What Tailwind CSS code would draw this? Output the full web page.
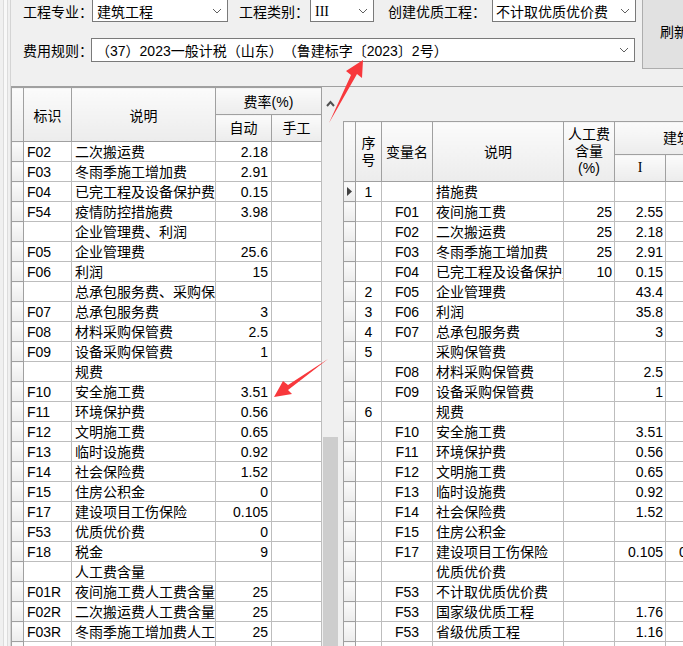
<!DOCTYPE html>
<html lang="zh-CN">
<head>
<meta charset="UTF-8" />
<title>费率</title>
<script src="https://cdn.jsdelivr.net/npm/@tailwindcss/browser@4"></script>
</head>
<body class="w-[683px] h-[646px] overflow-hidden bg-[#f0f0f0] text-[14px] leading-[20px] text-black [text-spacing-trim:space-all]" style="font-family:'Liberation Sans','Noto Sans CJK SC',sans-serif">
<div id="app" class="relative w-[683px] h-[646px] overflow-hidden flex">
  <!-- left gutter -->
  <div class="w-[11px] shrink-0 pl-[3px] border-r border-[#d4d4d4]">
    <div class="w-[5px] h-full bg-[#f8f8f8] border-x border-[#dcdcdc]"></div>
  </div>
  <div class="w-[672px] shrink-0 flex flex-col">
    <!-- top form -->
    <div class="h-[86px] shrink-0 flex">
      <div class="w-[630px] shrink-0 pl-[12px] whitespace-nowrap">
        <div class="flex items-center h-[23px] -mt-px">
          <span class="w-[69px] shrink-0 pt-[2px]">工程专业：</span>
          <div class="w-[136px] h-[23px] border border-[#7a7a7a] bg-white flex items-center justify-between pl-[4px] pr-[3px] shrink-0"><span class="pt-[2px]">建筑工程</span><svg class="w-[10px] h-[6px] mr-[2px]" viewBox="0 0 10 6" fill="none" stroke="#606060"><path d="M1 1l4 4 4-4"/></svg></div>
          <span class="ml-[11px] w-[71px] shrink-0 pt-[2px]">工程类别：</span>
          <div class="w-[64px] h-[23px] border border-[#7a7a7a] bg-white flex items-center justify-between pl-[4px] pr-[3px] shrink-0"><span class="pt-[2px]" style="font-family:'Liberation Serif',serif">III</span><svg class="w-[10px] h-[6px] mr-[2px]" viewBox="0 0 10 6" fill="none" stroke="#606060"><path d="M1 1l4 4 4-4"/></svg></div>
          <span class="ml-[14px] w-[104px] shrink-0 pt-[2px]">创建优质工程：</span>
          <div class="w-[144px] h-[23px] border border-[#7a7a7a] bg-white flex items-center justify-between pl-[3px] pr-[3px] shrink-0"><span class="pt-[2px]">不计取优质优价费</span><svg class="w-[10px] h-[6px] mr-[2px]" viewBox="0 0 10 6" fill="none" stroke="#606060"><path d="M1 1l4 4 4-4"/></svg></div>
        </div>
        <div class="flex items-center h-[24px] mt-[16px]">
          <span class="w-[68px] shrink-0 pt-[2px]">费用规则：</span>
          <div class="w-[544px] h-[24px] border border-[#7a7a7a] bg-white flex items-center justify-between pl-[4px] pr-[3px] shrink-0"><span class="pt-[2px]">（37）2023一般计税（山东）（鲁建标字〔2023〕2号）</span><svg class="w-[10px] h-[6px] mr-[2px]" viewBox="0 0 10 6" fill="none" stroke="#606060"><path d="M1 1l4 4 4-4"/></svg></div>
        </div>
      </div>
      <div class="w-[60px] shrink-0 h-[70px] -mt-px ml-[1px] border border-[#adadad] bg-[#e1e1e1] pl-[17px] pt-[22px] whitespace-nowrap">刷新</div>
    </div>

    <div class="flex-1 flex min-h-0 border-t border-[#a0a0a0]">
      <!-- left pane -->
      <div class="w-[311px] shrink-0 overflow-hidden bg-white">
        <table class="table-fixed border-collapse w-[311px] text-[14px] leading-[18px]">
          <colgroup><col class="w-[12px]"><col class="w-[48px]"><col class="w-[144px]"><col class="w-[56px]"><col class="w-[50px]"></colgroup>
          <thead>
            <tr class="h-[27px]">
              <th rowspan="2" class="border border-[#a0a0a0] bg-linear-to-b from-[#fbfbfb] to-[#ececec] font-normal p-0"></th>
              <th rowspan="2" class="border border-[#a0a0a0] bg-linear-to-b from-[#fbfbfb] to-[#ececec] font-normal p-0 pt-[2px]">标识</th>
              <th rowspan="2" class="border border-[#a0a0a0] bg-linear-to-b from-[#fbfbfb] to-[#ececec] font-normal p-0 pt-[2px]">说明</th>
              <th colspan="2" class="border border-[#a0a0a0] bg-linear-to-b from-[#fbfbfb] to-[#ececec] font-normal p-0 pt-[2px]">费率(%)</th>
            </tr>
            <tr class="h-[27px]">
              <th class="border border-[#a0a0a0] bg-linear-to-b from-[#fbfbfb] to-[#ececec] font-normal p-0">自动</th>
              <th class="border border-[#a0a0a0] bg-linear-to-b from-[#fbfbfb] to-[#ececec] font-normal p-0">手工</th>
            </tr>
          </thead>
          <tbody id="lb"></tbody>
        </table>
      </div>
      <!-- scrollbar -->
      <div class="w-[21px] shrink-0 flex flex-col pl-[1px]">
        <div class="h-[20px] w-[15px] flex items-end justify-center"><svg class="w-[9px] h-[7px]" viewBox="0 0 9 7" fill="none" stroke="#505050" stroke-width="2"><path d="M1 6l3.5-4L8 6"/></svg></div>
        <div class="flex-1 w-[15px] flex flex-col justify-end"><div class="h-[209px] bg-[#cdcdcd]"></div></div>
      </div>
      <!-- right pane -->
      <div class="flex-1 min-w-0 overflow-hidden">
        <div class="h-[34px]"></div>
        <div class="w-[340px] overflow-hidden bg-white">
          <table class="table-fixed border-collapse w-[373px] text-[14px] leading-[18px]">
            <colgroup><col class="w-[12px]"><col class="w-[26px]"><col class="w-[51px]"><col class="w-[131px]"><col class="w-[51px]"><col class="w-[51px]"><col class="w-[51px]"></colgroup>
            <thead>
              <tr class="h-[33px]">
                <th rowspan="2" class="border border-[#a0a0a0] bg-linear-to-b from-[#fbfbfb] to-[#ececec] font-normal p-0"></th>
                <th rowspan="2" class="border border-[#a0a0a0] bg-linear-to-b from-[#fbfbfb] to-[#ececec] font-normal p-0 leading-[17px]">序<br>号</th>
                <th rowspan="2" class="border border-[#a0a0a0] bg-linear-to-b from-[#fbfbfb] to-[#ececec] font-normal p-0 whitespace-nowrap">变量名</th>
                <th rowspan="2" class="border border-[#a0a0a0] bg-linear-to-b from-[#fbfbfb] to-[#ececec] font-normal p-0">说明</th>
                <th rowspan="2" class="border border-[#a0a0a0] bg-linear-to-b from-[#fbfbfb] to-[#ececec] font-normal p-0 leading-[17px] whitespace-nowrap">人工费<br>含量<br>(%)</th>
                <th colspan="2" class="border border-[#a0a0a0] bg-linear-to-b from-[#fbfbfb] to-[#ececec] font-normal p-0 whitespace-nowrap text-left pl-[48px]">建筑工程</th>
              </tr>
              <tr class="h-[27px]">
                <th class="border border-[#a0a0a0] bg-linear-to-b from-[#fbfbfb] to-[#ececec] font-normal p-0" style="font-family:'Liberation Serif',serif">I</th>
                <th class="border border-[#a0a0a0] bg-linear-to-b from-[#fbfbfb] to-[#ececec] font-normal p-0"></th>
              </tr>
            </thead>
            <tbody id="rb"></tbody>
          </table>
        </div>
      </div>
    </div>
  </div>

  <!-- red annotation arrows -->
  <svg class="absolute left-0 top-0 w-[683px] h-[646px] pointer-events-none" viewBox="0 0 683 646">
    <path d="M329 123 L351 75 L346 71 L363 60 L362 78 L357 74 Z" fill="#f8383c"/>
    <path d="M328 359 L288 385 L283 381 L274 397 L292 394 L288 390 Z" fill="#f8383c"/>
  </svg>
</div>
<script>
  // 左表: 标识, 说明, 自动
  const left = [
    ["F02","二次搬运费","2.18"],["F03","冬雨季施工增加费","2.91"],["F04","已完工程及设备保护费","0.15"],
    ["F54","疫情防控措施费","3.98"],["","企业管理费、利润",""],["F05","企业管理费","25.6"],["F06","利润","15"],
    ["","总承包服务费、采购保管费",""],["F07","总承包服务费","3"],["F08","材料采购保管费","2.5"],["F09","设备采购保管费","1"],
    ["","规费",""],["F10","安全施工费","3.51"],["F11","环境保护费","0.56"],["F12","文明施工费","0.65"],
    ["F13","临时设施费","0.92"],["F14","社会保险费","1.52"],["F15","住房公积金","0"],["F17","建设项目工伤保险","0.105"],
    ["F53","优质优价费","0"],["F18","税金","9"],["","人工费含量",""],["F01R","夜间施工费人工费含量","25"],
    ["F02R","二次搬运费人工费含量","25"],["F03R","冬雨季施工增加费人工费含量","25"],["","",""]
  ];
  // 右表: 序号, 变量名, 说明, 人工费含量, I, 下一列
  const right = [
    ["1","","措施费","","",""],["","F01","夜间施工费","25","2.55",""],["","F02","二次搬运费","25","2.18",""],
    ["","F03","冬雨季施工增加费","25","2.91",""],["","F04","已完工程及设备保护费","10","0.15",""],
    ["2","F05","企业管理费","","43.4",""],["3","F06","利润","","35.8",""],["4","F07","总承包服务费","","3",""],
    ["5","","采购保管费","","",""],["","F08","材料采购保管费","","2.5",""],["","F09","设备采购保管费","","1",""],
    ["6","","规费","","",""],["","F10","安全施工费","","3.51",""],["","F11","环境保护费","","0.56",""],
    ["","F12","文明施工费","","0.65",""],["","F13","临时设施费","","0.92",""],["","F14","社会保险费","","1.52",""],
    ["","F15","住房公积金","","",""],["","F17","建设项目工伤保险","","0.105","0.105"],["","","优质优价费","","",""],
    ["","F53","不计取优质优价费","","",""],["","F53","国家级优质工程","","1.76",""],["","F53","省级优质工程","","1.16",""],["","","","","",""]
  ];
  const bd = "border border-[#bdbdbd] p-0 pt-px overflow-hidden whitespace-nowrap";
  const ind = "border border-[#a0a0a0] bg-linear-to-b from-[#fbfbfb] to-[#ececec] p-0";
  document.getElementById("lb").innerHTML = left.map(r => `<tr class="h-[20px]">
    <td class="${ind}"></td>
    <td class="${bd} pl-[3px]">${r[0]}</td>
    <td class="${bd} pl-[3px]">${r[1]}</td>
    <td class="${bd} text-right pr-[3px]">${r[2]}</td>
    <td class="${bd}"></td></tr>`).join("");
  document.getElementById("rb").innerHTML = right.map((r, i) => `<tr class="h-[20px]">
    <td class="${ind}">${i === 0 ? '<svg class="w-[5px] h-[9px] ml-[3px]" viewBox="0 0 5 9"><path d="M0 0l5 4.5L0 9z" fill="#404040"/></svg>' : ''}</td>
    <td class="${bd} text-center">${r[0]}</td>
    <td class="${bd} text-center">${r[1]}</td>
    <td class="${bd} pl-[3px]">${r[2]}</td>
    <td class="${bd} text-right pr-[2px]">${r[3]}</td>
    <td class="${bd} text-right pr-[2px]">${r[4]}</td>
    <td class="${bd} text-right pr-[2px]">${r[5]}</td></tr>`).join("");
</script>
</body>
</html>
